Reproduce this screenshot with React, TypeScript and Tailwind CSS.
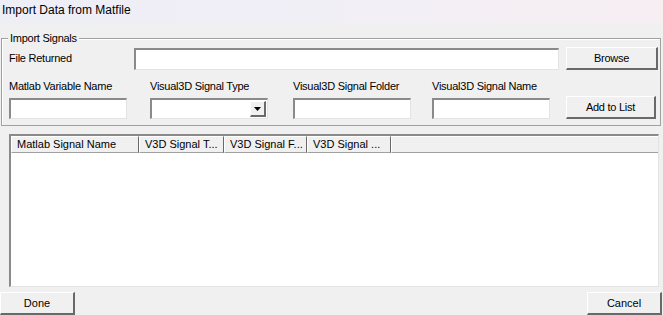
import React from 'react';

const sunken = 'bg-white border-t-2 border-l-2 border-b border-r border-t-[#8a8a8a] border-l-[#8a8a8a] border-b-[#e3e3e3] border-r-[#e3e3e3]';
const raised = 'bg-[#f0f0f0] border-t border-l border-b-2 border-r-2 border-t-white border-l-white border-b-[#696969] border-r-[#696969] flex items-center justify-center text-black';

const Field: React.FC<{ label: string; combo?: boolean }> = ({ label, combo }) => (
    <div className="w-[118px] flex flex-col">
        <div className="h-[14px] leading-[14px] whitespace-nowrap">{label}</div>
        <div className={`mt-[5px] h-[21px] relative ${sunken}`}>
            {combo && (
                <div className={`absolute right-[1px] top-[1px] w-[16px] h-[16px] ${raised}`}>
                    <svg width="7" height="4" viewBox="0 0 7 4">
                        <path d="M0 0 H7 L3.5 4 Z" fill="#000" />
                    </svg>
                </div>
            )}
        </div>
    </div>
);

const headers = [
    { label: 'Matlab Signal Name', w: 'w-[128px]' },
    { label: 'V3D Signal T...', w: 'w-[85px]' },
    { label: 'V3D Signal F...', w: 'w-[83px]' },
    { label: 'V3D Signal ...', w: 'w-[84px]' },
];

export default function App() {
    return (
        <div
            className="w-[663px] h-[315px] overflow-hidden flex flex-col bg-[#f0f0f0] text-[11px] tracking-[-0.25px] text-black"
            style={{ fontFamily: '"Liberation Sans", Arial, sans-serif' }}
        >
            <div className="h-[24px] shrink-0 px-[2px] pt-[1px] text-[12px] tracking-normal bg-gradient-to-r from-[#eeeef6] via-[#f1eff6] to-[#f7eef2]">
                Import Data from Matfile
            </div>

            <div className="relative mt-[14px] mx-[1px] w-[660px] h-[92px] border border-[#a0a0a0] shadow-[inset_1px_1px_0_#ffffff] pl-[7px] pr-[1px] pt-[8px]">
                <span className="absolute -top-[8px] left-[6px] px-[2px] bg-[#f0f0f0] leading-[14px]">Import Signals</span>

                <div className="flex items-center h-[23px]">
                    <div className="w-[125px]">File Returned</div>
                    <div className={`w-[425px] h-[22px] ${sunken}`} />
                    <button className={`ml-[7px] w-[92px] h-[23px] ${raised}`}>Browse</button>
                </div>

                <div className="flex items-end mt-[9px]">
                    <Field label="Matlab Variable Name" />
                    <div className="ml-[23px]"><Field label="Visual3D Signal Type" combo /></div>
                    <div className="ml-[25px]"><Field label="Visual3D Signal Folder" /></div>
                    <div className="ml-[21px]"><Field label="Visual3D Signal Name" /></div>
                    <button className={`ml-[16px] w-[90px] h-[23px] ${raised}`}>Add to List</button>
                </div>
            </div>

            <div className={`mt-[8px] ml-[9px] w-[650px] h-[153px] shrink-0 flex flex-col ${sunken}`}>
                <div className="flex h-[17px] shrink-0 tracking-normal">
                    {headers.map((h) => (
                        <div
                            key={h.label}
                            className={`${h.w} h-full pl-[5px] leading-[15px] whitespace-nowrap overflow-hidden bg-[#f0f0f0] border-t border-l border-b border-r border-t-white border-l-white border-b-[#a0a0a0] border-r-[#696969]`}
                        >
                            {h.label}
                        </div>
                    ))}
                    <div className="flex-1 h-full bg-[#f0f0f0] border-t border-l border-b border-t-white border-l-white border-b-[#a0a0a0]" />
                </div>
                <div className="flex-1 bg-white" />
            </div>

            <div className="flex justify-between mt-[5px] tracking-normal">
                <button className={`w-[75px] h-[23px] ${raised}`}>Done</button>
                <button className={`w-[75px] h-[23px] mr-[1px] ${raised}`}>Cancel</button>
            </div>
        </div>
    );
}
